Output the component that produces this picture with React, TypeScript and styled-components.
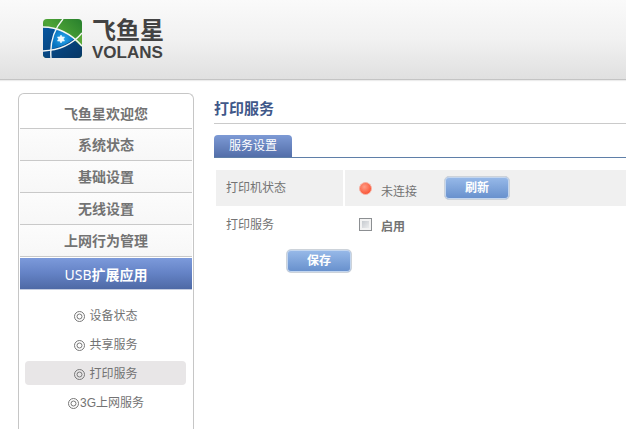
import React from "react";
import styled, { createGlobalStyle, css } from "styled-components";

const GlobalStyle = createGlobalStyle`
  * { box-sizing: border-box; }
  html, body { margin: 0; background: #fff; }
  body {
    color: #737373;
    font: 12px/18px "Liberation Sans", "Noto Sans CJK SC", sans-serif;
    overflow-x: hidden;
  }
  button, input { font: inherit; }
`;

const Page = styled.div`
  display: flex;
  flex-direction: column;
  min-height: 100vh;
`;

const Header = styled.header`
  display: flex;
  gap: 10px;
  height: 80px;
  padding: 19px 43px 0;
  background: linear-gradient(#fafafa, #f1f1f1 50%, #e0e0e0);
  border-bottom: 1px solid #c4c4c4;
  box-shadow: 0 1px 1px #ececec;
`;

const Wordmark = styled.div`
  display: flex;
  flex-direction: column;
  color: #434343;
  font-weight: bold;
`;

const ChineseName = styled.span`
  font-size: 24px;
  line-height: 24px;
`;

const LatinName = styled.span`
  margin-top: 1px;
  font-size: 17px;
  line-height: 17px;
`;

const Body = styled.div`
  display: flex;
  flex: 1;
  gap: 20px;
  padding: 13px 0 0 18px;
`;

const Sidebar = styled.nav`
  flex: 0 0 176px;
  padding: 0 1px;
  border: 1px solid #c6c6c6;
  border-bottom: 0;
  border-radius: 6px 6px 0 0;
`;

const MenuLink = styled.a<{ $active?: boolean }>`
  display: flex;
  align-items: center;
  justify-content: center;
  height: 32px;
  border-bottom: 1px solid #c9c9c9;
  background: linear-gradient(#fcfcfc, #f7f7f7);
  color: #737373;
  font-size: 14px;
  font-weight: bold;
  text-decoration: none;

  &:first-child {
    height: 35px;
    padding-top: 5px;
    background: none;
  }

  ${(p) =>
    p.$active &&
    css`
      margin-top: 1px;
      padding-top: 3px;
      background: linear-gradient(#7c9adb, #6482c5 50%, #4e69a5);
      border-bottom-color: #c5cde0;
      color: #fff;
    `}
`;

const Prefix = styled.span`
  font-family: "Noto Sans", sans-serif;
  font-weight: normal;
`;

const SubMenu = styled.ul`
  display: flex;
  flex-direction: column;
  gap: 5px;
  margin: 0;
  padding: 13px 6px 0 5px;
  list-style: none;
`;

const SubLink = styled.a<{ $active?: boolean; $tight?: boolean }>`
  display: flex;
  align-items: center;
  justify-content: center;
  gap: ${(p) => (p.$tight ? 1 : 4)}px;
  height: 24px;
  padding: 2px 0 0 1px;
  border-radius: 4px;
  background: ${(p) => (p.$active ? "#e8e6e7" : "transparent")};
  color: #737373;
  text-decoration: none;
`;

const Content = styled.main`
  flex: 1;
  min-width: 0;
`;

const Title = styled.h1`
  margin: 0;
  padding: 5px 0 4px;
  border-bottom: 1px solid #cacaca;
  color: #3f5889;
  font-size: 15px;
  line-height: 21px;
`;

const Tabs = styled.div`
  display: flex;
  margin-top: 11px;
  border-bottom: 1px solid #5f7fa8;
`;

const Tab = styled.button`
  width: 78px;
  height: 22px;
  padding: 0;
  border: 0;
  border-radius: 4px 4px 0 0;
  background: linear-gradient(#7d9ad5, #536ea9);
  color: #fff;
`;

const Settings = styled.table`
  width: calc(100% - 2px);
  margin: 12px 0 0 2px;
  border-collapse: collapse;
`;

const Row = styled.tr<{ $shaded?: boolean }>`
  height: ${(p) => (p.$shaded ? 36 : 38)}px;
  background: ${(p) => (p.$shaded ? "#f0f0f0" : "transparent")};
`;

const NameCell = styled.th`
  width: 128px;
  padding: 0 0 1px 10px;
  border-right: 2px solid #fff;
  font-weight: normal;
  text-align: left;
`;

const ValueCell = styled.td`
  padding: 0 0 0 14px;
`;

const Status = styled.div`
  display: flex;
  align-items: center;
  gap: 9px;
`;

const StatusText = styled.span`
  padding-top: 8px;
`;

const Lamp = styled.span`
  width: 13px;
  height: 13px;
  border: 1px solid #f6b3a5;
  border-radius: 50%;
  background: radial-gradient(circle at 40% 35%, #ff9c85, #fa5638 75%);
`;

const CheckLabel = styled.label`
  display: flex;
  align-items: center;
  gap: 9px;
  font-weight: bold;
`;

const Check = styled.input`
  appearance: none;
  width: 13px;
  height: 13px;
  margin: 0 0 2px;
  border: 1px solid #8c8f92;
  background: linear-gradient(135deg, #bcc1c7, #f6f6f6);
  box-shadow: inset 0 0 0 2px #f3f3f3;

  &:checked {
    background: #5575b5;
  }
`;

const CheckText = styled.span`
  padding-top: 3px;
`;

const ActionButton = styled.button`
  width: 66px;
  height: 24px;
  padding: 0;
  border: 1px solid #cdd3da;
  border-radius: 5px;
  background: linear-gradient(#98bae9, #668fcc);
  box-shadow: inset 0 0 0 1px #c3d6ef;
  color: #fff;
  font-weight: bold;
  line-height: 20px;
`;

const RefreshSlot = styled.div`
  display: flex;
  margin-left: 18px;
`;

const Actions = styled.div`
  padding: 5px 0 0 72px;
`;

const LogoMark = () => (
  <svg width="39" height="39" viewBox="0 0 39 39" role="img" aria-label="VOLANS">
    <defs>
      <linearGradient id="green" x1="0" y1="1" x2="1" y2="0">
        <stop offset="0" stopColor="#17672a" />
        <stop offset="0.5" stopColor="#4fa536" />
        <stop offset="1" stopColor="#277f2d" />
      </linearGradient>
      <linearGradient id="blue" x1="0" y1="0" x2="1" y2="1">
        <stop offset="0" stopColor="#07569f" />
        <stop offset="1" stopColor="#073765" />
      </linearGradient>
      <radialGradient id="glow">
        <stop offset="0" stopColor="#28a9f0" />
        <stop offset="1" stopColor="#0871bd" />
      </radialGradient>
      <clipPath id="tile">
        <rect width="39" height="39" rx="4" />
      </clipPath>
    </defs>
    <g clipPath="url(#tile)">
      <rect width="39" height="39" fill="url(#green)" />
      <path d="M0 8Q22 8 39 27V39H0Z" fill="url(#blue)" />
      <path d="M39 14Q35 18 31 21L39 28Z" fill="#59a838" />
      <path d="M12 9Q23 12 31 20Q22 27 9 30Q8 19 12 9Z" fill="url(#glow)" />
      <g fill="none" stroke="#f4f7f5" strokeWidth="1.4">
        <path d="M0 8Q22 8 39 27" />
        <path d="M20 0Q6 16 8 39" />
        <path d="M0 32Q25 31 39 14" />
      </g>
      <path
        d="M18 16l1.200 2 2.300 0-1.100 2 1.100 2-2.300 0-1.200 2-1.200-2-2.300 0 1.100-2-1.100-2 2.300 0z"
        fill="#effaff"
        stroke="#effaff"
        strokeWidth="0.6"
      />
    </g>
  </svg>
);

const TargetIcon = () => (
  <svg width="11" height="11" viewBox="0 0 11 11" fill="none" stroke="#777" aria-hidden="true">
    <circle cx="5.500" cy="5.500" r="5" />
    <circle cx="5.500" cy="5.500" r="2.500" />
  </svg>
);

const menu = [
  { name: "飞鱼星欢迎您" },
  { name: "系统状态" },
  { name: "基础设置" },
  { name: "无线设置" },
  { name: "上网行为管理" },
  { prefix: "USB", name: "扩展应用", active: true },
];
const subMenu = ["设备状态", "共享服务", "打印服务", "3G上网服务"];

export default function App() {
  return (
    <>
      <GlobalStyle />
      <Page>
        <Header>
          <LogoMark />
          <Wordmark>
            <ChineseName>飞鱼星</ChineseName>
            <LatinName>VOLANS</LatinName>
          </Wordmark>
        </Header>
        <Body>
          <Sidebar>
            {menu.map(({ prefix, name, active }) => (
              <MenuLink key={name} href="#" $active={active}>
                {prefix && <Prefix>{prefix}</Prefix>}
                {name}
              </MenuLink>
            ))}
            <SubMenu>
              {subMenu.map((name) => (
                <li key={name}>
                  <SubLink href="#" $active={name === "打印服务"} $tight={name.startsWith("3G")}>
                    <TargetIcon />
                    {name}
                  </SubLink>
                </li>
              ))}
            </SubMenu>
          </Sidebar>
          <Content>
            <Title>打印服务</Title>
            <Tabs role="tablist">
              <Tab type="button" role="tab" aria-selected="true">
                服务设置
              </Tab>
            </Tabs>
            <Settings>
              <tbody>
                <Row $shaded>
                  <NameCell scope="row">打印机状态</NameCell>
                  <ValueCell>
                    <Status>
                      <Lamp />
                      <StatusText>未连接</StatusText>
                      <RefreshSlot>
                        <ActionButton type="button">刷新</ActionButton>
                      </RefreshSlot>
                    </Status>
                  </ValueCell>
                </Row>
                <Row>
                  <NameCell scope="row">打印服务</NameCell>
                  <ValueCell>
                    <CheckLabel>
                      <Check type="checkbox" />
                      <CheckText>启用</CheckText>
                    </CheckLabel>
                  </ValueCell>
                </Row>
              </tbody>
            </Settings>
            <Actions>
              <ActionButton type="button">保存</ActionButton>
            </Actions>
          </Content>
        </Body>
      </Page>
    </>
  );
}
